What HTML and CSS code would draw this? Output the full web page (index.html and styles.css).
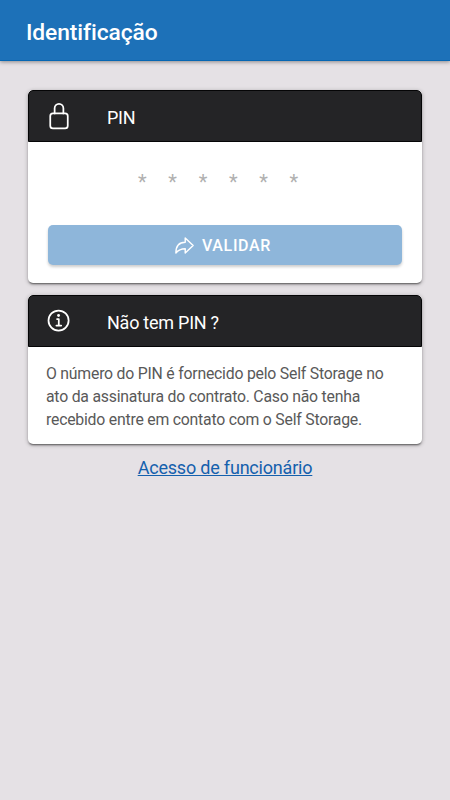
FILE: index.html
```
<!DOCTYPE html>
<html lang="pt-BR">
<head>
    <meta charset="UTF-8">
    <meta name="viewport" content="width=device-width, initial-scale=1.0">
    <title>Identificação</title>
    <link rel="stylesheet" href="styles.css">
</head>
<body>
    <header class="toolbar">
        <h1>Identificação</h1>
    </header>

    <main class="content">
        <form class="card" id="pinForm">
            <div class="card-header">
                <svg class="icon icon-lock" viewBox="0 0 512 512">
                    <path d="M336 208v-95a80 80 0 00-160 0v95"/>
                    <rect x="96" y="208" width="320" height="272" rx="48" ry="48"/>
                </svg>
                <label for="pin">PIN</label>
            </div>
            <div class="card-body pin-body">
                <input class="pin-input" type="text" id="pin" name="pin" maxlength="6" placeholder="******" autocomplete="off">
                <button class="btn-validate" type="submit" disabled>
                    <svg class="icon-share" viewBox="0 0 512 512">
                        <path d="M448 256L272 88v96C103.570 184 64 304.770 64 424c48.610-62.240 91.600-96 208-96v96z"/>
                    </svg>
                    <span>VALIDAR</span>
                </button>
            </div>
        </form>

        <section class="card">
            <div class="card-header">
                <svg class="icon icon-info" viewBox="0 0 512 512">
                    <path d="M248 64C146.390 64 64 146.390 64 248s82.390 184 184 184 184-82.390 184-184S349.610 64 248 64z"/>
                    <path d="M220 220h32v116M208 340h88"/>
                    <circle class="dot" cx="248" cy="156" r="26"/>
                </svg>
                <h2>Não tem PIN ?</h2>
            </div>
            <p class="card-body info-text">O número do PIN é fornecido pelo Self Storage no ato da assinatura do contrato. Caso não tenha recebido entre em contato com o Self Storage.</p>
        </section>

        <a class="staff-link" href="#">Acesso de funcionário</a>
    </main>
</body>
</html>
```
FILE: styles.css
```
* {
    box-sizing: border-box;
}
body {
    font-family: Roboto, sans-serif;
    background-color: #e5e1e5;
    margin: 0;
    min-height: 100vh;
}
.toolbar {
    display: flex;
    align-items: center;
    height: 61px;
    padding: 4px 26px 0;
    background-color: #1d71b8;
    border-bottom: 1px solid #0666b3;
    box-shadow: 0 1px 4px rgba(0, 0, 0, 0.4);
}
.toolbar h1 {
    margin: 0;
    color: #fff;
    font-size: 22.8px;
    font-weight: 500;
    letter-spacing: -0.1px;
}
.content {
    display: flex;
    flex-direction: column;
    padding: 29px 28px 0;
}
.card {
    margin: 0 0 12px;
    background-color: #fff;
    border-radius: 5px;
    box-shadow: 0 2px 2px -1px rgba(0, 0, 0, 0.5), 0 1px 4px rgba(0, 0, 0, 0.3);
    overflow: hidden;
}
.card-header {
    display: flex;
    align-items: center;
    height: 52px;
    padding: 0 18px;
    background-color: #242426;
    border: 1px solid #050506;
    border-radius: 5px 5px 0 0;
    color: #fff;
}
.card-header label,
.card-header h2 {
    margin: 3px 0 0;
    font-size: 18px;
    font-weight: 400;
    letter-spacing: -0.25px;
}
.icon {
    width: 28px;
    height: 28px;
    margin-right: 34px;
    margin-left: -2px;
    fill: none;
    stroke: #fff;
    stroke-width: 32;
    stroke-linecap: round;
    stroke-linejoin: round;
}
.icon-info {
    margin-bottom: 1px;
}
.icon .dot {
    fill: #fff;
    stroke: none;
}
.pin-body {
    padding: 18px 20px;
}
.pin-input {
    display: block;
    width: 100%;
    height: 43px;
    padding: 0 0 0 8px;
    border: none;
    outline: none;
    background: none;
    color: #333;
    font-family: inherit;
    font-size: 20px;
    letter-spacing: 21.7px;
    text-align: center;
}
.pin-input::placeholder {
    color: #b0b0b0;
    opacity: 1;
}
.btn-validate {
    display: flex;
    align-items: center;
    justify-content: center;
    gap: 6px;
    width: 100%;
    height: 40px;
    margin-top: 22px;
    padding: 0 6px 0 0;
    border: none;
    border-radius: 5px;
    background-color: #8eb6da;
    box-shadow: 0 2px 3px rgba(0, 0, 0, 0.2);
    color: #fff;
    font-family: inherit;
    font-size: 16px;
    font-weight: 500;
    letter-spacing: 0.65px;
}
.icon-share {
    width: 23px;
    height: 23px;
    fill: none;
    stroke: #fff;
    stroke-width: 32;
    stroke-linejoin: round;
}
.info-text {
    margin: 0;
    padding: 15px 18px 12px;
    color: #595959;
    font-size: 15.8px;
    letter-spacing: -0.22px;
    line-height: 23.2px;
}
.staff-link {
    align-self: center;
    color: #1460ad;
    font-size: 18px;
    letter-spacing: -0.2px;
    line-height: 24px;
}
```
